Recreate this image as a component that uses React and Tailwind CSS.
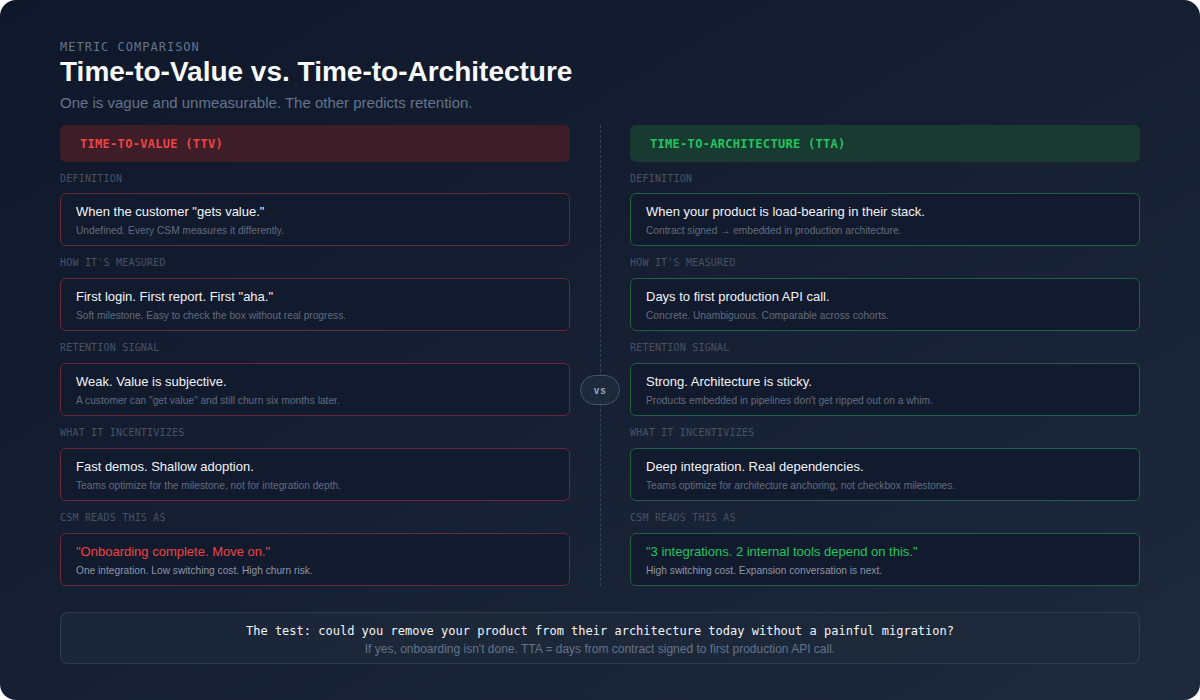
const mono = "font-['DejaVu_Sans_Mono','Liberation_Mono',monospace]"
const sans = "font-['Liberation_Sans','Helvetica',Arial,sans-serif]"

const rows = [
    {
        label: 'DEFINITION',
        left: { title: 'When the customer "gets value."', sub: 'Undefined. Every CSM measures it differently.' },
        right: { title: 'When your product is load-bearing in their stack.', sub: 'Contract signed → embedded in production architecture.' },
    },
    {
        label: "HOW IT'S MEASURED",
        left: { title: 'First login. First report. First "aha."', sub: 'Soft milestone. Easy to check the box without real progress.' },
        right: { title: 'Days to first production API call.', sub: 'Concrete. Unambiguous. Comparable across cohorts.' },
    },
    {
        label: 'RETENTION SIGNAL',
        left: { title: 'Weak. Value is subjective.', sub: 'A customer can "get value" and still churn six months later.' },
        right: { title: 'Strong. Architecture is sticky.', sub: "Products embedded in pipelines don't get ripped out on a whim." },
    },
    {
        label: 'WHAT IT INCENTIVIZES',
        left: { title: 'Fast demos. Shallow adoption.', sub: 'Teams optimize for the milestone, not for integration depth.' },
        right: { title: 'Deep integration. Real dependencies.', sub: 'Teams optimize for architecture anchoring, not checkbox milestones.' },
    },
    {
        label: 'CSM READS THIS AS',
        left: { title: '"Onboarding complete. Move on."', sub: 'One integration. Low switching cost. High churn risk.', quote: true },
        right: { title: '"3 integrations. 2 internal tools depend on this."', sub: 'High switching cost. Expansion conversation is next.', quote: true },
    },
]

function Column({ side }) {
    const red = side === 'left'
    return (
        <div className="flex flex-col">
            <div
                className={`h-[37px] rounded-md px-5 flex items-center ${mono} text-[12px] font-bold tracking-wide ${
                    red ? 'bg-[#3d1d27] text-[#ef4444]' : 'bg-[#183a31] text-[#22c55e]'
                }`}
            >
                {red ? 'TIME-TO-VALUE (TTV)' : 'TIME-TO-ARCHITECTURE (TTA)'}
            </div>

            {rows.map((row, i) => {
                const item = row[side]
                return (
                    <div key={row.label}>
                        <div className={`mt-[10px] h-[14px] leading-[14px] ${mono} text-[10px] tracking-[0.02em] text-[#465366]`}>
                            {row.label}
                        </div>
                        <div
                            className={`${i === 0 ? 'mt-[7px]' : 'mt-[8px]'} rounded-md border bg-[#121a2e] px-[15px] pt-[8px] pb-[6px] ${
                                red ? 'border-[#6b2835]' : 'border-[#1f6140]'
                            }`}
                        >
                            <div
                                className={`${sans} text-[13px] leading-5 ${
                                    item.quote ? (red ? 'text-[#ef4444]' : 'text-[#22c55e]') : 'text-[#f1f5f9]'
                                }`}
                            >
                                {item.title}
                            </div>
                            <div
                                className={`${sans} mt-[1px] text-[10.2px] leading-4 ${
                                    item.quote ? 'text-[#8e97a6]' : 'text-[#626c7d]'
                                }`}
                            >
                                {item.sub}
                            </div>
                        </div>
                    </div>
                )
            })}
        </div>
    )
}

export default function App() {
    return (
        <div className="w-[1200px] h-[700px] overflow-hidden rounded-2xl bg-gradient-to-br from-[#0f172a] to-[#1e293b] px-[60px] pt-[40px]">
            {/* Header */}
            <div className={`h-[14px] leading-[14px] ${mono} text-[12px] tracking-[1px] text-[#64748b]`}>METRIC COMPARISON</div>
            <h1 className={`mt-[2px] h-[32px] leading-[32px] ${sans} text-[28px] font-bold text-[#f8fafc]`}>
                Time-to-Value vs. Time-to-Architecture
            </h1>
            <p className={`mt-[5px] h-[20px] leading-5 ${sans} text-[15px] text-[#64748b]`}>
                One is vague and unmeasurable. The other predicts retention.
            </p>

            {/* Comparison */}
            <div className="mt-[12px] grid grid-cols-[510px_60px_510px] pb-[19px]">
                <Column side="left" />
                <div className="relative flex justify-center">
                    <div className="h-full w-0 border-l border-dashed border-[#334155]" />
                    <div
                        className={`absolute left-[10px] top-[250px] flex h-[30px] w-[40px] items-center justify-center rounded-full border border-[#475569] bg-[#1e293b] ${mono} text-[10px] font-bold tracking-wider text-[#94a3b8]`}
                    >
                        vs
                    </div>
                </div>
                <Column side="right" />
            </div>

            {/* Footer test */}
            <div className="mt-[7px] rounded-lg border border-[#334155]/80 bg-[#1e293b]/70 pt-[10px] pb-[6px] text-center">
                <div className={`${mono} text-[12px] leading-4 text-[#f1f5f9]`}>
                    The test: could you remove your product from their architecture today without a painful migration?
                </div>
                <div className={`${sans} mt-[2px] text-[12px] leading-4 text-[#64748b]`}>
                    If yes, onboarding isn't done. TTA = days from contract signed to first production API call.
                </div>
            </div>
        </div>
    )
}
